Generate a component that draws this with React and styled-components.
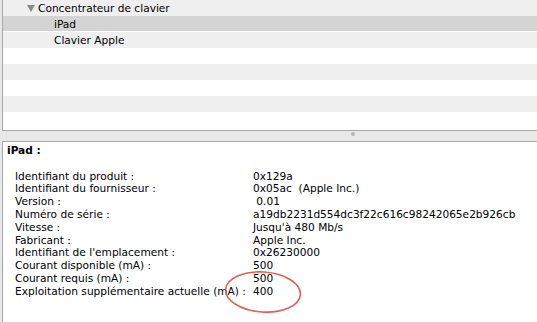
import React from 'react'
import styled, { createGlobalStyle } from 'styled-components'

const GlobalStyle = createGlobalStyle`
  html, body {
    margin: 0;
    padding: 0;
    background: #e8e8e8;
  }
  body {
    font-family: "DejaVu Sans", Verdana, sans-serif;
    font-size: 10.6px;
    color: #000;
  }
`;

const tree = [
  { label: 'Concentrateur de clavier', depth: 0, open: true },
  { label: 'iPad', depth: 1, selected: true },
  { label: 'Clavier Apple', depth: 1 },
  { label: '', depth: 0 },
  { label: '', depth: 0 },
  { label: '', depth: 0 },
  { label: '', depth: 0 },
  { label: '', depth: 0 },
];

const details = [
  ['Identifiant du produit :', '0x129a'],
  ['Identifiant du fournisseur :', '0x05ac\u00a0\u00a0(Apple Inc.)'],
  ['Version :', '\u00a00.01'],
  ['Numéro de série :', 'a19db2231d554dc3f22c616c98242065e2b926cb'],
  ['Vitesse :', "Jusqu'à 480 Mb/s"],
  ['Fabricant :', 'Apple Inc.'],
  ["Identifiant de l'emplacement :", '0x26230000'],
  ['Courant disponible (mA) :', '500'],
  ['Courant requis (mA) :', '500'],
  ['Exploitation supplémentaire actuelle (mA) :', '400'],
];

const Window = styled.div`
  width: 537px;
  height: 322px;
  display: flex;
  flex-direction: column;
  overflow: hidden;
  position: relative;
`;

const TreePane = styled.div`
  height: 131px;
  margin-left: 2px;
  border-left: 1px solid #a8a8a8;
  border-bottom: 1px solid #a8a8a8;
  box-sizing: border-box;
  background: #fff;
  overflow: hidden;
`;

const Row = styled.div`
  height: 16px;
  box-sizing: border-box;
  display: flex;
  align-items: center;
  padding-left: ${p => 24 + p.$depth * 27}px;
  background: ${p => (p.$selected ? '#d4d4d4' : p.$odd ? '#fff' : '#efefef')};
  border-bottom: ${p => (p.$selected ? '1px solid #fff' : 'none')};
  white-space: nowrap;
`;

const Disclosure = styled.span`
  width: 0;
  height: 0;
  border-left: 4px solid transparent;
  border-right: 4px solid transparent;
  border-top: 7px solid #8a8a8a;
  margin-right: 3px;
  margin-top: 1px;
`;

const Splitter = styled.div`
  height: 10px;
  display: flex;
  align-items: center;
  justify-content: center;
  padding-left: 168px;
  box-sizing: border-box;
`;

const Dimple = styled.span`
  width: 4px;
  height: 4px;
  border-radius: 50%;
  background: #b8b8b8;
  margin-top: -4px;
`;

const DetailPane = styled.div`
  flex: 1;
  margin-left: 2px;
  border-left: 1px solid #a8a8a8;
  border-top: 1px solid #a8a8a8;
  background: #fff;
  padding: 2px 0 0 4px;
  line-height: 12.8px;
`;

const Heading = styled.div`
  font-weight: bold;
  margin-bottom: 12.8px;
`;

const DetailList = styled.div`
  display: grid;
  grid-template-columns: 238px auto;
  padding-left: 8px;
  white-space: nowrap;
`;

const Annotation = styled.svg`
  position: absolute;
  left: 222px;
  top: 268px;
  pointer-events: none;
`;

export default function App() {
  return (
    <>
      <GlobalStyle />
      <Window>
        <TreePane>
          {tree.map((r, i) => (
            <Row key={i} $depth={r.depth} $selected={r.selected} $odd={i % 2 === 1}>
              {r.open && <Disclosure />}
              {r.label}
            </Row>
          ))}
        </TreePane>
        <Splitter>
          <Dimple />
        </Splitter>
        <DetailPane>
          <Heading>iPad :</Heading>
          <DetailList>
            {details.map(([k, v]) => (
              <React.Fragment key={k}>
                <span>{k}</span>
                <span>{v}</span>
              </React.Fragment>
            ))}
          </DetailList>
        </DetailPane>
        <Annotation width="84" height="50" viewBox="0 0 84 50">
          <ellipse
            cx="41"
            cy="24"
            rx="37.5"
            ry="20"
            fill="none"
            stroke="#e0605a"
            strokeWidth="1.6"
            transform="rotate(4 41 24)"
          />
        </Annotation>
      </Window>
    </>
  )
}
